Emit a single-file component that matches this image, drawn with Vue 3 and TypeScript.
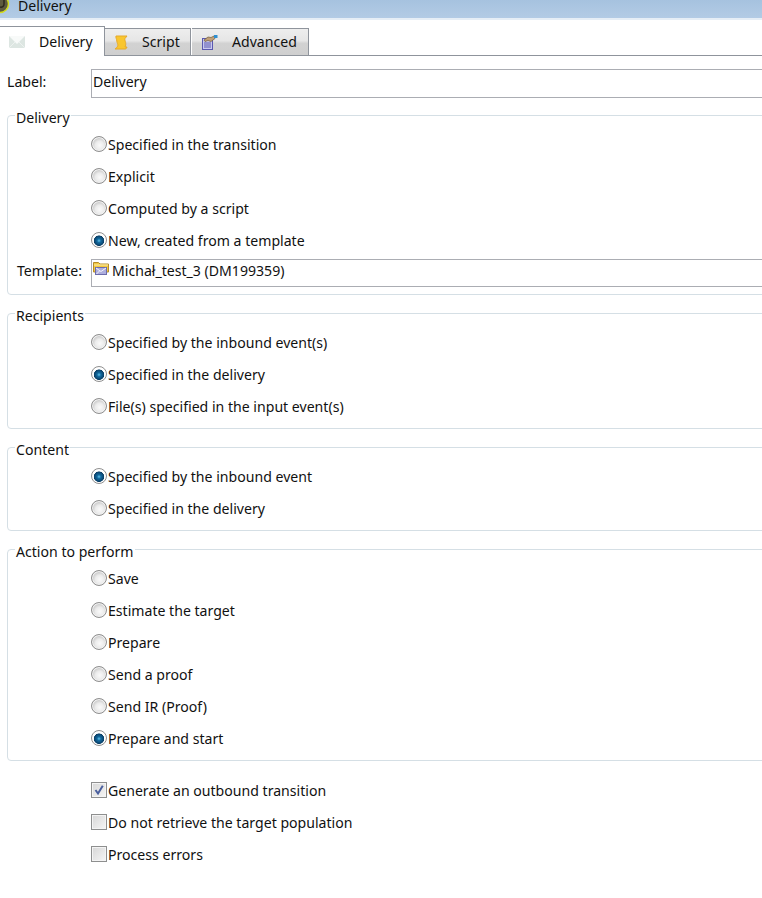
<script setup lang="ts">
interface Opt { text: string; on?: boolean }
const delivery: Opt[] = [
  { text: 'Specified in the transition' },
  { text: 'Explicit' },
  { text: 'Computed by a script' },
  { text: 'New, created from a template', on: true },
]
const recipients: Opt[] = [
  { text: 'Specified by the inbound event(s)' },
  { text: 'Specified in the delivery', on: true },
  { text: 'File(s) specified in the input event(s)' },
]
const content: Opt[] = [
  { text: 'Specified by the inbound event', on: true },
  { text: 'Specified in the delivery' },
]
const actions: Opt[] = [
  { text: 'Save' },
  { text: 'Estimate the target' },
  { text: 'Prepare' },
  { text: 'Send a proof' },
  { text: 'Send IR (Proof)' },
  { text: 'Prepare and start', on: true },
]
const checks: Opt[] = [
  { text: 'Generate an outbound transition', on: true },
  { text: 'Do not retrieve the target population' },
  { text: 'Process errors' },
]
const groups = [
  { title: 'Recipients', items: recipients },
  { title: 'Content', items: content },
  { title: 'Action to perform', items: actions },
]
</script>

<template>
  <div class="page">
    <header class="titlebar">
      <svg class="app-icon" width="12" height="16" viewBox="0 0 12 16">
        <circle cx="0" cy="4" r="8.500" fill="#5e5b3e" stroke="#d3dc1e" stroke-width="1.500" />
        <path d="M0 7a3 3 0 0 0 4-3V0" fill="none" stroke="#2c2a1c" stroke-width="1.500" />
      </svg>
      <span class="title-text">Delivery</span>
    </header>

    <nav class="tabs">
      <div class="tab active">
        <svg class="tab-icon" width="16" height="14" viewBox="0 0 16 14">
          <rect x="0" y="1" width="16" height="12" fill="#dde6e2" />
          <path d="M0 1h16L8 9z" fill="#f8faf9" />
          <path d="M0 13l6-6M16 13l-6-6" fill="none" stroke="#eef2f0" />
        </svg>
        <span>Delivery</span>
      </div>
      <div class="tab script">
        <svg class="tab-icon" width="14" height="15" viewBox="0 0 14 15">
          <path d="M2 1h11l-2 2.500c-.5 1 .3 2.500.6 4 .3 1.500.2 3-.6 4.500h2c-.5 1.500-1 2-2 2H1c.8-1 2.500-1.500 2.800-3.500.2-1.500-.8-2.500-1-4.500C2.700 4 1.500 2.500 2 1z" fill="#f9c62f" stroke="#e6a92a" />
        </svg>
        <span>Script</span>
      </div>
      <div class="tab advanced">
        <svg class="tab-icon" width="16" height="16" viewBox="0 0 16 16">
          <rect x="0.500" y="4.500" width="10" height="11" fill="#c9c9ee" stroke="#5a58b0" />
          <path d="M2 9h7M2 11h7M2 13h7" stroke="#5a58b0" />
          <path d="M2 6l4-3 3 .5 3-1.500 1 2.500-4 3-3-1-3 1z" fill="#c2a077" stroke="#6e5a3a" stroke-width=".7" />
          <path d="M12 1h3.500v3H12z" fill="#2f8fd0" />
        </svg>
        <span>Advanced</span>
      </div>
    </nav>

    <div class="label-row">
      <span class="row-label">Label:</span>
      <div class="textbox label-box">Delivery</div>
    </div>

    <section class="group group-first">
      <span class="legend">Delivery</span>
      <label v-for="o in delivery" :key="o.text" class="opt">
        <span class="radio" :class="{ on: o.on }"></span>{{ o.text }}
      </label>
      <div class="template-row">
        <span class="template-label">Template:</span>
        <div class="textbox template-box">
          <svg class="folder" width="16" height="14" viewBox="0 0 16 14">
            <path d="M.5 11V1.500h5l1.500 1.500h8.500v8z" fill="#f2c83f" stroke="#b58c2a" />
            <path d="M1 4h14" stroke="#fbeeb0" />
            <rect x="2.500" y="6.500" width="11" height="7" fill="#aeaedd" stroke="#6c6cab" />
            <path d="M3 7l5 3.500L13 7M3.500 13l3-3" fill="none" stroke="#f4f4fb" />
          </svg>
          <span>Michał_test_3 (DM199359)</span>
        </div>
      </div>
    </section>

    <section v-for="g in groups" :key="g.title" class="group">
      <span class="legend">{{ g.title }}</span>
      <label v-for="o in g.items" :key="o.text" class="opt">
        <span class="radio" :class="{ on: o.on }"></span>{{ o.text }}
      </label>
    </section>

    <div class="checks">
      <label v-for="c in checks" :key="c.text" class="opt">
        <span class="check">
          <svg v-if="c.on" width="12" height="12" viewBox="0 0 12 12">
            <path d="M2.500 6l2.500 3.500L9.800 1.800" fill="none" stroke="#4a5f9e" stroke-width="2" />
          </svg>
        </span>{{ c.text }}
      </label>
    </div>
  </div>
</template>

<style>
html, body { background: #fff; overflow: hidden; }
</style>

<style scoped>
.page {
  width: 762px;
  height: 898px;
  overflow: hidden;
  background: #fff;
  color: #111;
  font-family: "Noto Sans", "DejaVu Sans", sans-serif;
  font-size: 14.1px;
  line-height: 18px;
}
.titlebar {
  height: 18px;
  padding-left: 18px;
  position: relative;
  overflow: hidden;
  background: linear-gradient(#a6c2df, #b3cbe5);
  border-bottom: 2px solid #e6eef6;
}
.title-text { display: block; line-height: 11px; }
.app-icon { position: absolute; left: 0; top: 0; }
.tabs {
  margin-top: 6px;
  height: 29px;
  display: flex;
  align-items: flex-end;
  border-bottom: 1px solid #8f949c;
}
.tab {
  height: 27px;
  box-sizing: border-box;
  display: flex;
  align-items: center;
  border: 1px solid #8f949c;
  border-bottom: 0;
  border-left: 0;
  margin-right: 1px;
  background: linear-gradient(#eeeeee 0, #e6e6e6 45%, #d2d2d2 55%, #cfcfcf 100%);
}
.tab.active {
  height: 30px;
  margin-bottom: -1px;
  width: 105px;
  padding-left: 9px;
  gap: 14px;
  background: #fff;
  margin-right: 0;
}
.tab.script { width: 86px; padding-left: 9px; gap: 14px; }
.tab.advanced { width: 117px; padding-left: 10px; gap: 14px; }
.tab-icon { flex: none; }
.label-row {
  margin-top: 13px;
  display: flex;
  align-items: center;
  height: 29px;
}
.row-label { width: 91px; padding: 0 0 3px 7px; box-sizing: border-box; flex: none; }
.textbox {
  flex: none;
  width: 700px;
  box-sizing: border-box;
  border: 1px solid #abadb3;
  display: flex;
  align-items: center;
  background: #fff;
}
.label-box { height: 29px; padding: 0 0 3px 1px; }
.group {
  position: relative;
  width: 800px;
  margin: 18px 0 0 7px;
  padding: 12px 0 6px;
  border: 1px solid #d5dfe5;
  border-radius: 4px;
}
.group-first { margin-top: 17px; padding-bottom: 7px; }
.legend {
  position: absolute;
  left: 7px;
  top: -7px;
  padding: 0 1px;
  background: #fff;
}
.opt {
  display: flex;
  align-items: center;
  box-sizing: border-box;
  height: 32px;
  padding: 2px 0 0 83px;
}
.checks { margin-top: 13px; }
.checks .opt { padding-left: 91px; }
.radio {
  flex: none;
  width: 16px;
  height: 16px;
  margin: 0 1px 2px 0;
  box-sizing: border-box;
  border-radius: 50%;
  border: 1px solid #8f8f8f;
  background: radial-gradient(circle 7px at 55% 60%, #fafafa 0, #ececec 60%, #cfcfcf 100%);
  box-shadow: inset 0 0 0 1px #f2f2f2;
}
.radio.on {
  background: radial-gradient(circle 6px at 50% 55%, #62c4ea 0, #126aa0 32%, #0a3f66 82%, #fff 92%);
  box-shadow: none;
}
.check {
  flex: none;
  width: 16px;
  height: 16px;
  margin: 0 1px 2px 0;
  box-sizing: border-box;
  border: 1px solid #8e8f8f;
  background: linear-gradient(135deg, #d6d6d6, #f6f6f6);
  box-shadow: inset 0 0 0 1px #f4f4f4;
  display: flex;
  align-items: center;
  justify-content: center;
}
.template-row {
  display: flex;
  align-items: center;
  margin-top: 3px;
}
.template-label { width: 83px; padding: 0 0 4px 9px; box-sizing: border-box; flex: none; }
.template-box { height: 28px; padding-left: 1px; gap: 3px; align-items: flex-start; }
.template-box span { margin-top: 2px; }
.folder { flex: none; margin-top: 1px; }
</style>
